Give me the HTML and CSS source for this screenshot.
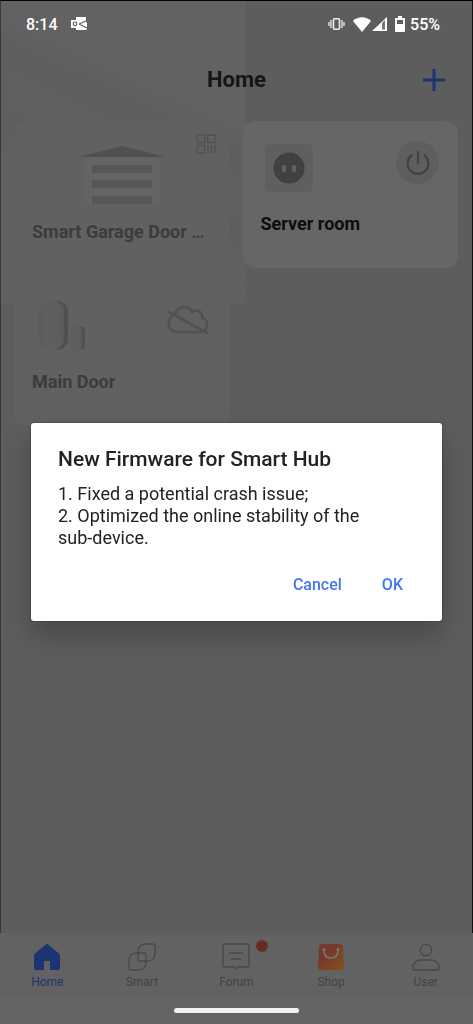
FILE: index.html
```html
<!DOCTYPE html>
<html lang="en">
<head>
<meta charset="utf-8">
<meta name="viewport" content="width=device-width, initial-scale=1">
<title>Home</title>
<link rel="stylesheet" href="styles.css">
</head>
<body>
<div class="app">
  <div class="screen">
    <div class="status">
      <span>8:14</span>
      <svg class="mail" width="17" height="14" viewBox="0 0 17 14"><path fill="#fff" d="M5 0h10v5l1 1v6l-1 1H5v-2H0V3h5z"/><path fill="none" stroke="#606060" stroke-width="1.200" d="M8 7l8-3.500M8 7l8 4"/><rect x="2.300" y="5" width="3.400" height="3.600" rx="1.500" fill="none" stroke="#606060" stroke-width="1.200"/></svg>
      <div class="status-right">
        <svg width="17" height="14" viewBox="0 0 17 14" fill="none" stroke="#eee"><rect x="5.500" y="1.700" width="6" height="10.600" rx="1" stroke-width="1.600"/><path stroke-width="1.300" d="M3 3v8M14 3v8M1 5v4M16 5v4"/></svg>
        <svg class="wifi" width="18" height="15" viewBox="0 0 18 15"><path fill="#fff" d="M0 4C5-1 13-1 18 4L9 15z"/></svg>
        <svg width="15" height="14" viewBox="0 0 15 14"><path fill="#fff" d="M0 14 15 0v14z"/><path fill="#777" d="M10 6l3-3v9.500h-3z"/></svg>
        <svg class="battery" width="10" height="16" viewBox="0 0 10 16"><path fill="#fff" fill-rule="evenodd" d="M3 0h4v2h2q1 0 1 1v12q0 1-1 1H1q-1 0-1-1V3q0-1 1-1h2zM2 4v4h6V4z"/></svg>
        <span>55%</span>
      </div>
    </div>
    <header class="header">
      <h1>Home</h1>
      <button class="add" aria-label="Add"><svg width="22" height="22" viewBox="0 0 22 22"><path stroke="#1c3473" stroke-width="3" d="M11 0v22M0 11h22"/></svg></button>
    </header>
    <main class="devices">
      <article class="card muted">
        <div class="card-art garage-art">
          <svg width="86" height="58" viewBox="0 0 86 58"><path fill="#646464" d="M5 11h75v47H5z"/><path fill="#505050" d="M0 11 39 1q4-2 8 0l39 10z"/><path fill="#575757" d="M13 19h60v8H13zM13 34h60v8H13zM13 50h60v8H13z"/></svg>
          <svg class="qr" width="20" height="20" viewBox="0 0 20 20" fill="none" stroke="#515151" stroke-width="1.300"><path d="M1 1h7.500v7.500H1zM11.500 1H19v7.500h-7.500zM1 11.500h7.500V19H1zM12 11v8.500M15.500 11v8.500M19 11v8.500"/></svg>
        </div>
        <h2>Smart Garage Door …</h2>
      </article>
      <article class="card active">
        <div class="card-art plug-art">
          <svg width="48" height="48" viewBox="0 0 48 48"><rect width="48" height="48" rx="6" fill="#5f5f5f"/><circle cx="24" cy="24" r="15.500" fill="#414141"/><rect x="17" y="21" width="4" height="7" rx="1.500" fill="#606060"/><rect x="27" y="21" width="4" height="7" rx="1.500" fill="#606060"/></svg>
          <button class="power" aria-label="Power"><svg width="24" height="24" viewBox="0 0 24 24" fill="none" stroke="#424242" stroke-width="2.200" stroke-linecap="round"><path d="M12 1v11M5.300 4.300A10.500 10.500 0 1 0 18.700 4.300"/></svg></button>
        </div>
        <h2>Server room</h2>
      </article>
      <article class="card muted">
        <div class="card-art door-art">
          <svg width="48" height="50" viewBox="0 0 48 50"><defs><linearGradient id="sensor"><stop offset="0" stop-color="#5c5c5c"/><stop offset=".25" stop-color="#5f5f5f"/><stop offset=".8" stop-color="#5e5e5e"/><stop offset="1" stop-color="#595959"/></linearGradient></defs><rect x="6" width="24" height="49" rx="11" fill="#505050"/><rect x="1" width="25" height="49" rx="11" fill="url(#sensor)"/><rect x="36" y="25" width="11" height="24" rx="5" fill="#505050"/><rect x="33" y="25" width="11" height="24" rx="5" fill="url(#sensor)"/></svg>
          <svg width="42" height="30" viewBox="0 0 42 30" fill="none" stroke="#515151" stroke-width="2.600" stroke-linecap="round"><path d="M9 27h24c9 0 9-13 2-14 1-7-6-9-10-6-3-7-15-7-17 3-8 2-9 15 1 17z"/><path d="M2 7l38 21"/></svg>
        </div>
        <h2>Main Door</h2>
      </article>
    </main>
  </div>
  <nav class="tabs">
    <a href="#home" class="tab current"><svg width="28" height="28" viewBox="0 0 28 28"><path fill="#1b3472" d="M13 1.500q1-1 2 0l11 9q1 1 1 2V25q0 2-2 2h-8v-9h-6v9H3q-2 0-2-2V12.500q0-1 1-2z"/></svg>Home</a>
    <a href="#smart" class="tab"><svg width="28" height="28" viewBox="0 0 28 28" fill="none" stroke="#484848" stroke-width="1.300"><path d="M18 1h7q2 0 2 2v7q0 8-8 8h-7q-2 0-2-2V9q0-8 8-8z"/><path d="M9 10h7q2 0 2 2v7q0 8-8 8H3q-2 0-2-2v-7q0-8 8-8z"/></svg>Smart</a>
    <a href="#forum" class="tab"><svg width="28" height="28" viewBox="0 0 28 28" fill="none" stroke="#484848" stroke-width="1.400"><path d="M3 1h22q2 0 2 2v19q0 2-2 2h-9l-2 2-2-2H3q-2 0-2-2V3q0-2 2-2z"/><path d="M7 10h14M9 16h10"/></svg>Forum<span class="badge"></span></a>
    <a href="#shop" class="tab"><svg width="28" height="28" viewBox="0 0 28 28"><defs><linearGradient id="bag" x1="0" y1="0" x2="1" y2="1"><stop offset=".35" stop-color="#77392d"/><stop offset="1" stop-color="#80541b"/></linearGradient></defs><path fill="url(#bag)" d="M5 1h18q3 0 3 3l1 20q0 3-3 3H4q-3 0-3-3L2 4q0-3 3-3z"/><path fill="none" stroke="#777" stroke-width="1.600" stroke-linecap="round" d="M7 7q0 8 7 8t7-8"/><circle cx="7" cy="6.500" r="1.500" fill="#777"/><circle cx="21" cy="6.500" r="1.500" fill="#777"/></svg>Shop</a>
    <a href="#user" class="tab"><svg width="28" height="28" viewBox="0 0 28 28" fill="none" stroke="#484848" stroke-width="1.300"><circle cx="14" cy="7" r="5.700"/><path d="M8 17h12q7 1 7 8 0 2-2 2H3q-2 0-2-2 0-7 7-8z"/></svg>User</a>
  </nav>
  <div class="gesture"><span></span></div>
</div>
<div class="overlay">
  <section class="dialog" role="dialog" aria-labelledby="dialog-title">
    <h2 id="dialog-title">New Firmware for Smart Hub</h2>
    <p>1. Fixed a potential crash issue;<br>2. Optimized the online stability of the <span class="nowrap">sub-device.</span></p>
    <div class="actions"><button>Cancel</button><button>OK</button></div>
  </section>
</div>
</body>
</html>
```
FILE: styles.css
```css
* { box-sizing: border-box; }
body { margin: 0; font-family: Roboto, "Liberation Sans", sans-serif; background: #646464; }
h1, h2, p { margin: 0; }
svg { display: block; flex: none; }
button { border: 0; padding: 0; background: none; font: inherit; }
.app { min-height: 100vh; display: flex; flex-direction: column; }
.screen {
  flex: 1;
  border: 1px solid #383838;
  border-top-color: #000;
  border-right-color: #111;
  border-bottom: 0;
  background:
    linear-gradient(205deg, #626262 0 30%, #5e5e5e 38%, #606060 48%, #5e5e5e 56%, #616161 68%) no-repeat 0 0 / 244px 302px,
    #5d5d5d;
}
.status {
  display: flex;
  align-items: center;
  height: 46px;
  padding: 0 32px 0 25px;
  color: #fff;
  font-size: 16px;
  font-weight: 500;
}
.mail { margin-left: 13px; }
.status-right { display: flex; align-items: center; margin-left: auto; }
.wifi { margin: 0 1px 0 8px; }
.battery { margin: 0 5px 0 8px; }
.header {
  display: grid;
  grid-template-columns: 1fr auto 1fr;
  align-items: center;
  height: 66px;
  padding: 0 27px;
}
.header h1 { grid-column: 2; color: #151515; font-size: 22px; line-height: 28px; font-weight: 700; }
.add { justify-self: end; }
.devices {
  display: grid;
  grid-template-columns: 1fr 1fr;
  grid-auto-rows: 147px;
  gap: 11px 13px;
  padding: 8px 14px 0 13px;
}
.card { min-width: 0; padding: 0 18px; border-radius: 12px; }
.card.muted { background: #616161; color: #3c3c3c; }
.card.active { background: #666; color: #0d0d0d; }
.card h2 {
  font-size: 18px;
  line-height: 26px;
  font-weight: 700;
  white-space: nowrap;
}
.card-art { display: flex; justify-content: space-between; }
.garage-art { height: 98px; padding: 25px 0 0 47px; }
.qr { margin: -12px -4px 0 0; }
.plug-art { height: 90px; padding: 23px 1px 0 4px; }
.door-art { height: 90px; padding: 22px 3px 0 6px; }
.door-art svg:last-child { margin-top: 4px; }
.power {
  display: grid;
  place-items: center;
  width: 43px;
  height: 43px;
  margin-top: -3px;
  border-radius: 50%;
  background: #5e5e5e;
}
.tabs { display: grid; grid-template-columns: repeat(5, 1fr); height: 64px; background: #626262; }
.tab {
  position: relative;
  display: flex;
  flex-direction: column;
  align-items: center;
  gap: 3px;
  padding-top: 10px;
  color: #424242;
  font-size: 12px;
  line-height: 16px;
  text-decoration: none;
}
.tab.current { color: #1c3473; }
.badge {
  position: absolute;
  top: 7px;
  left: calc(50% + 20px);
  width: 12px;
  height: 12px;
  border-radius: 50%;
  background: #682a27;
}
.gesture { display: flex; justify-content: center; height: 27px; padding-top: 11px; background: #646464; }
.gesture span { width: 125px; height: 5px; border-radius: 3px; background: #f2f2f2; }
.overlay {
  position: fixed;
  inset: 0;
  display: flex;
  align-items: center;
  padding: 20px 31px 0;
}
.dialog {
  width: 100%;
  padding: 22px 27px;
  border-radius: 3px;
  background: #fff;
  box-shadow: 0 14px 28px rgba(0, 0, 0, .24), 0 0 1px 1px rgba(0, 0, 0, .15);
  color: #222;
}
.dialog h2 { font-size: 21px; line-height: 28px; font-weight: 500; }
.dialog p { margin-top: 10px; font-size: 18px; line-height: 22px; }
.nowrap { white-space: nowrap; }
.actions {
  display: flex;
  justify-content: flex-end;
  gap: 40px;
  margin-top: 20px;
  padding-right: 12px;
}
.actions button { height: 30px; color: #4477ee; font-size: 16px; font-weight: 500; }
```
